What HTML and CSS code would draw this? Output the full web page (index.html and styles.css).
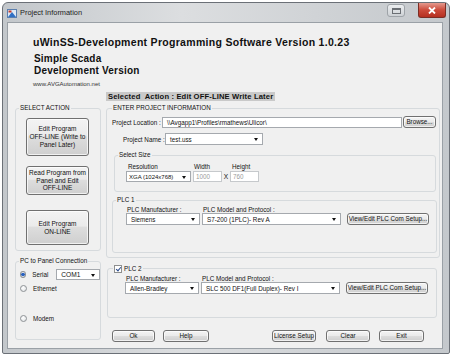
FILE: index.html
```html
<!DOCTYPE html>
<html lang="en">
<head>
  <meta charset="UTF-8" />
  <title>Project Information</title>
  <link rel="stylesheet" href="styles.css">
</head>
<body>

  <div class="window">
    <div class="titlebar">
      <svg class="app-icon" width="10" height="9" viewBox="0 0 10 9">
        <rect x="0.5" y="0.5" width="9" height="8" fill="#dfe9f5" stroke="#5c7fae"/>
        <path d="M1 8 L5 3 L9 8 Z" fill="#2f6fc4"/>
        <rect x="1.5" y="1.5" width="3" height="2" fill="#c23b2c"/>
      </svg>
      <span class="win-title">Project Information</span>
      <div class="caption-btns">
        <span class="cap-btn restore">
          <svg width="9" height="6" viewBox="0 0 9 6">
            <rect x="0.5" y="0.5" width="8" height="5" fill="none" stroke="#6b6f74"/>
            <rect x="0.5" y="0.5" width="8" height="1.5" fill="#6b6f74"/>
          </svg>
        </span>
        <span class="cap-btn close">
          <svg width="8" height="7" viewBox="0 0 8 7">
            <path d="M1 0.5 L7 6.5 M7 0.5 L1 6.5" stroke="#fff" stroke-width="1.8"/>
          </svg>
        </span>
      </div>
    </div>

    <div class="client">
      <div class="header">
        <h1>uWinSS-Development Programming Software Version 1.0.23</h1>
        <h2>Simple Scada<br>Development Version</h2>
        <div class="url">www.AVGAutomation.net</div>
      </div>

      <div class="main">
        <div class="left-col">
          <fieldset class="group actions">
            <legend>SELECT ACTION</legend>
            <div class="btn action-btn act1">Edit Program<br>OFF-LINE (Write to<br>Panel Later)</div>
            <div class="btn action-btn act2">Read Program from<br>Panel and Edit<br>OFF-LINE</div>
            <div class="btn action-btn act3">Edit Program<br>ON-LINE</div>
          </fieldset>

          <fieldset class="group conn">
            <legend>PC to Panel Connection</legend>
            <div class="radio-row serial">
              <span class="radio checked"></span>
              <span class="radio-label">Serial</span>
              <div class="combo com-combo">COM1<span class="arrow"></span></div>
            </div>
            <div class="radio-row ethernet">
              <span class="radio"></span>
              <span class="radio-label">Ethernet</span>
            </div>
            <div class="radio-row modem">
              <span class="radio"></span>
              <span class="radio-label">Modem</span>
            </div>
          </fieldset>
        </div>

        <div class="right-col">
          <div class="selected">Selected&nbsp; Action : Edit OFF-LINE Write Later</div>

          <fieldset class="group project">
            <legend>ENTER PROJECT INFORMATION</legend>

            <div class="row location-row">
              <span class="lbl loc-lbl">Project Location :</span>
              <div class="textbox loc-box">\\Avgapp1\Profiles\rmathews\Ulicor\</div>
              <div class="btn browse-btn">Browse...</div>
            </div>

            <div class="row name-row">
              <span class="lbl name-lbl">Project Name :</span>
              <div class="combo name-combo">test.uss<span class="arrow"></span></div>
            </div>

            <fieldset class="group size">
              <legend>Select Size</legend>
              <div class="size-grid">
                <span class="lbl">Resolution</span>
                <span class="lbl">Width</span>
                <span></span>
                <span class="lbl">Height</span>
                <div class="combo res-combo">XGA (1024x768)<span class="arrow"></span></div>
                <div class="textbox disabled">1000</div>
                <span class="times">X</span>
                <div class="textbox disabled">760</div>
              </div>
            </fieldset>

            <fieldset class="group plc plc1">
              <legend>PLC 1</legend>
              <div class="plc-grid">
                <span class="lbl">PLC Manufacturer :</span>
                <span class="lbl">PLC Model and Protocol :</span>
                <span></span>
                <div class="combo">Siemens<span class="arrow"></span></div>
                <div class="combo">S7-200 (1PLC)- Rev A<span class="arrow"></span></div>
                <div class="btn setup-btn">View/Edit PLC Com Setup...</div>
              </div>
            </fieldset>
          </fieldset>

          <fieldset class="group plc plc2">
            <legend><span class="checkbox"></span>PLC 2</legend>
            <div class="plc-grid">
              <span class="lbl">PLC Manufacturer :</span>
              <span class="lbl">PLC Model and Protocol :</span>
              <span></span>
              <div class="combo">Allen-Bradley<span class="arrow"></span></div>
              <div class="combo">SLC 500 DF1(Full Duplex)- Rev I<span class="arrow"></span></div>
              <div class="btn setup-btn">View/Edit PLC Com Setup...</div>
            </div>
          </fieldset>

          <div class="footer">
            <div class="btn ok-btn">Ok</div>
            <div class="btn help-btn">Help</div>
            <div class="btn license-btn">License Setup</div>
            <div class="btn clear-btn">Clear</div>
            <div class="btn exit-btn">Exit</div>
          </div>
        </div>
      </div>
    </div>
  </div>

</body>
</html>
```

FILE: styles.css
```css
body {
  margin: 0;
  background: #fff;
  font-family: 'Liberation Sans', Arial, sans-serif;
  color: #111;
}

.window {
  margin: 2px 0 0 2px;
  width: 448px;
  height: 352px;
  box-sizing: border-box;
  border: 1px solid #6b7077;
  border-radius: 6px 6px 2px 2px;
  background: linear-gradient(90deg, #c3c7cb, #dcdee0 40%, #c4c8cc);
  padding: 0 6px 4px 4px;
  display: flex;
  flex-direction: column;
}

/* title bar */
.titlebar {
  height: 19px;
  display: flex;
  align-items: center;
}

.app-icon {
  margin-top: 1px;
}

.win-title {
  margin-left: 3px;
  font-size: 7.4px;
  color: #222;
}

.caption-btns {
  margin-left: auto;
  margin-right: -3px;
  display: flex;
  align-self: flex-start;
  gap: 13px;
}

.cap-btn {
  display: flex;
  align-items: center;
  justify-content: center;
  box-sizing: border-box;
  border-radius: 0 0 3px 3px;
}

.cap-btn.restore {
  width: 18px;
  height: 13px;
  margin-top: 1px;
  border: 1px solid #9ea3a8;
  border-radius: 3px;
  background: linear-gradient(#eceef0, #cdd1d5);
}

.cap-btn.close {
  width: 28px;
  height: 15px;
  border: 1px solid #7c2d24;
  border-top: none;
  background: linear-gradient(#e59a8e, #cc4a3a 50%, #b52f20);
}

/* client */
.client {
  flex: 1;
  background: #f0f0f0;
  border: 1px solid #9aa0a6;
  font-size: 6.3px;
}

.header {
  padding-left: 25px;
}

h1 {
  margin: 13px 0 0;
  font-size: 10.5px;
  letter-spacing: 0.3px;
  line-height: 12px;
  font-weight: bold;
}

h2 {
  margin: 5px 0 0 1px;
  font-size: 10px;
  letter-spacing: 0.2px;
  line-height: 12px;
  font-weight: bold;
}

.url {
  margin-top: 3px;
  font-size: 6px;
  line-height: 8px;
  color: #333;
}

.main {
  margin-top: 3px;
  display: grid;
  grid-template-columns: 86px 334px;
  column-gap: 5px;
  padding-left: 7px;
}

/* group boxes */
.group {
  margin: 0;
  padding: 0;
  min-width: 0;
  border: 1px solid #d6dadd;
  border-radius: 3px;
  box-sizing: border-box;
}

legend {
  padding: 0 1px;
  margin-left: 3px;
  font-size: 6.3px;
  line-height: 8px;
  color: #111;
}

.lbl {
  white-space: nowrap;
}

.btn {
  box-sizing: border-box;
  border: 1px solid #707070;
  border-radius: 3px;
  background: linear-gradient(#f3f3f3, #ebebeb 45%, #dddddd 50%, #cfcfcf);
  box-shadow: inset 0 0 0 1px rgba(255,255,255,0.7);
  display: flex;
  align-items: center;
  justify-content: center;
  text-align: center;
  line-height: 7.7px;
  color: #111;
}

/* left column */
.actions {
  margin-top: 13px;
  padding-bottom: 5px;
}

.action-btn {
  margin-left: 10px;
  width: 63px;
  font-size: 6.5px;
  white-space: nowrap;
}

.act1 { margin-top: 6px; height: 38px; }
.act2 { margin-top: 10px; height: 29px; }
.act3 { margin-top: 15px; height: 35px; }

.conn {
  margin-top: 6px;
  height: 83px;
}

.radio-row {
  display: flex;
  align-items: center;
  padding-left: 4px;
  height: 8px;
}

.radio-row.serial {
  margin-top: 4px;
  height: 11px;
}

.radio-row.ethernet { margin-top: 4px; }
.radio-row.modem { margin-top: 22px; }

.radio {
  width: 7px;
  height: 7px;
  box-sizing: border-box;
  border: 1px solid #8e9296;
  border-radius: 50%;
  background: radial-gradient(circle at 40% 35%, #ffffff, #dcdfe2);
}

.radio.checked {
  background: radial-gradient(circle, #2a62c2 0 1.6px, #e4e8ee 2px);
}

.radio-label {
  margin-left: 6px;
}

.com-combo {
  margin-left: 8px;
  width: 49px;
  height: 11px;
  font-size: 6.6px;
}

/* combo / textbox */
.combo,
.textbox {
  box-sizing: border-box;
  height: 11px;
  border: 1px solid #a5a9ae;
  background: #fff;
  display: flex;
  align-items: center;
  padding-left: 4px;
  white-space: nowrap;
  overflow: hidden;
}

.combo {
  position: relative;
  padding-right: 10px;
}

.arrow {
  position: absolute;
  right: 4px;
  top: 50%;
  margin-top: -1px;
  border-left: 2.5px solid transparent;
  border-right: 2.5px solid transparent;
  border-top: 3px solid #111;
}

.textbox.disabled {
  border-color: #c6c9cc;
  color: #9a9a9a;
  padding-left: 2px;
}

/* right column */
.selected {
  margin-top: 1px;
  width: fit-content;
  height: 9px;
  line-height: 9px;
  padding: 0 2px;
  font-size: 7.6px;
  letter-spacing: 0.15px;
  font-weight: bold;
  background: #c9c9c9;
}

.project {
  margin-top: 3px;
  padding-bottom: 4px;
}

.project > legend {
  margin-left: 5px;
}

.row {
  display: flex;
  align-items: center;
}

.location-row {
  margin-top: 4px;
  padding-left: 5px;
  height: 12px;
}

.loc-lbl {
  width: 50px;
}

.loc-box {
  width: 240px;
}

.browse-btn {
  margin-left: 1px;
  width: 33px;
  height: 12px;
}

.name-row {
  margin-top: 5px;
  padding-left: 16px;
  height: 12px;
}

.name-lbl {
  flex: none;
  width: 42px;
}

.name-combo {
  width: 98px;
  height: 12px;
}

.size {
  margin: 6px 0 0 7px;
  width: 322px;
  height: 41px;
}

.size-grid {
  margin-top: 3px;
  padding-left: 11px;
  display: grid;
  grid-template-columns: 65px 31px 8px 29px;
  grid-template-rows: 8px 11px;
  row-gap: 1px;
  column-gap: 0;
  align-items: center;
}

.size-grid .lbl {
  padding-left: 2px;
}

.size-grid .lbl:nth-child(2) {
  padding-left: 3px;
}

.res-combo {
  width: 65px;
  padding-left: 2px;
  font-size: 6px;
}

.size-grid .textbox:nth-of-type(2) {
  margin-left: 2px;
}

.times {
  text-align: center;
  font-size: 6.6px;
}

.plc1 {
  margin: 4px 0 0 5px;
  width: 325px;
  height: 57px;
}

.plc2 {
  margin-top: 6px;
  margin-left: 1px;
  width: 330px;
  height: 54px;
}

.plc2 > legend {
  margin-left: 5px;
  display: flex;
  align-items: center;
  line-height: 9px;
}

.checkbox {
  width: 8px;
  height: 8px;
  box-sizing: border-box;
  border: 1px solid #8e8f8f;
  background: #fff;
  margin-right: 2px;
  position: relative;
}

.checkbox::after {
  content: "";
  position: absolute;
  left: 1.5px;
  top: 0;
  width: 2px;
  height: 4px;
  border-right: 1.3px solid #2a4a8c;
  border-bottom: 1.3px solid #2a4a8c;
  transform: rotate(40deg);
}

.plc-grid {
  margin-top: 1px;
  padding-left: 13px;
  display: grid;
  grid-template-columns: 74px 139px 86px;
  grid-template-rows: 8px 12px;
  column-gap: 2px;
  align-items: center;
}

.plc2 .plc-grid {
  padding-left: 17px;
}

.plc-grid .lbl {
  padding-left: 1px;
}

.plc-grid .combo {
  height: 12px;
}

.setup-btn {
  margin-left: 4px;
  height: 12px;
  white-space: nowrap;
}

.footer {
  margin-top: 12px;
  padding-left: 6px;
  display: flex;
}

.footer .btn {
  height: 12px;
}

.ok-btn { width: 43px; }
.help-btn { width: 46px; margin-left: 8px; }
.license-btn { width: 44px; margin-left: 63px; }
.clear-btn { width: 44px; margin-left: 10px; }
.exit-btn { width: 45px; margin-left: 9px; }
```
